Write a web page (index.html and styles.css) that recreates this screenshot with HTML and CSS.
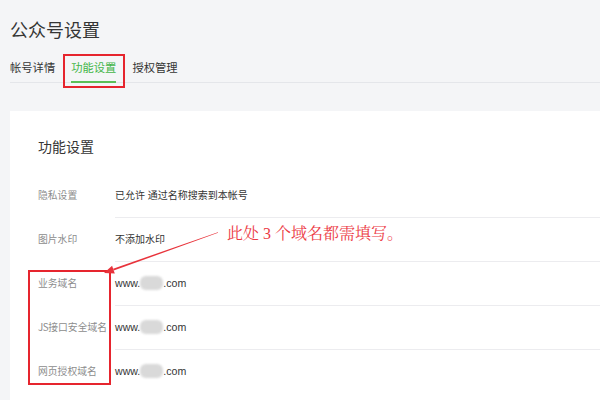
FILE: index.html
```html
<!DOCTYPE html>
<html lang="zh-CN">
<head>
<meta charset="utf-8">
<title>公众号设置</title>
<link rel="stylesheet" href="styles.css">
</head>
<body>
<div class="page">
  <h1 class="title">公众号设置</h1>
  <div class="tabs">
    <span class="tab">帐号详情</span>
    <span class="tab active">功能设置</span>
    <span class="tab">授权管理</span>
  </div>
  <div class="card">
    <h2 class="card-title">功能设置</h2>
    <div class="rows">
      <div class="row"><div class="label">隐私设置</div><div class="value">已允许 通过名称搜索到本帐号</div></div>
      <div class="row"><div class="label">图片水印</div><div class="value">不添加水印</div></div>
      <div class="row"><div class="label">业务域名</div><div class="value"><span class="latin">www.</span><span class="mask"></span><span class="latin">.com</span></div></div>
      <div class="row"><div class="label"><span class="label-latin">JS</span>接口安全域名</div><div class="value"><span class="latin">www.</span><span class="mask"></span><span class="latin">.com</span></div></div>
      <div class="row last"><div class="label">网页授权域名</div><div class="value"><span class="latin">www.</span><span class="mask"></span><span class="latin">.com</span></div></div>
    </div>
  </div>

  <div class="mark mark-tab"></div>
  <div class="mark mark-labels"></div>
  <svg class="arrow" width="600" height="400" viewBox="0 0 600 400">
    <polygon points="218.1,232.8 217.9,232.2 113.1,268.7 113.7,270.6" fill="#e8333b"/>
    <polygon points="104,273 114.8,273.6 112.1,265.7" fill="#e8333b"/>
  </svg>
  <div class="note">此处 3 个域名都需填写。</div>
</div>
</body>
</html>
```

FILE: styles.css
```css
html, body {
  margin: 0;
  padding: 0;
  background: #f4f5f7;
  font-family: "Liberation Sans", "Noto Sans CJK SC", sans-serif;
  color: #353535;
}

.page {
  position: relative;
  width: 600px;
  height: 400px;
  overflow: hidden;
  padding-left: 10px;
  box-sizing: border-box;
}

.title {
  margin: 19px 0 0 0;
  font-size: 18px;
  line-height: 24px;
  font-weight: normal;
  color: #353535;
}

.tabs {
  display: flex;
  gap: 16px;
  margin-top: 15px;
  border-bottom: 1px solid #e4e6ea;
}

.tab {
  font-size: 11.3px;
  line-height: 20px;
  padding-bottom: 3px;
  border-bottom: 2px solid transparent;
  margin-bottom: -1px;
  color: #353535;
}

.tab.active {
  color: #44b549;
  border-bottom-color: #5cbf58;
}

.card {
  margin-top: 28px;
  background: #ffffff;
  padding: 26px 0 40px 28px;
}

.card-title {
  margin: 0 0 17px 0;
  font-size: 14px;
  line-height: 20px;
  font-weight: normal;
  color: #353535;
}

.row {
  display: flex;
}

.label {
  width: 77px;
  flex: none;
  font-family: "Noto Sans CJK SC", sans-serif;
  font-size: 9.8px;
  line-height: 43px;
  color: #8d8d8d;
  white-space: nowrap;
}

.label-latin {
  letter-spacing: -0.4px;
}

.value {
  flex: 1;
  font-size: 10px;
  line-height: 43px;
  color: #353535;
  border-bottom: 1px solid #ececef;
}

.latin {
  font-size: 10.6px;
}

.row.last .value {
  border-bottom: none;
}

.mask {
  display: inline-block;
  width: 23px;
  height: 14px;
  vertical-align: -3px;
  background: #d9d9d9;
  border-radius: 6px;
  filter: blur(1.2px);
}

.mark {
  position: absolute;
  border: 2px solid #e6252e;
  box-sizing: border-box;
}

.mark-tab {
  left: 63px;
  top: 54px;
  width: 62px;
  height: 34px;
}

.mark-labels {
  left: 28px;
  top: 270px;
  width: 83px;
  height: 115px;
}

.arrow {
  position: absolute;
  left: 0;
  top: 0;
  pointer-events: none;
}

.note {
  position: absolute;
  left: 227px;
  top: 224px;
  font-family: "Liberation Serif", "Noto Serif CJK SC", "Noto Sans CJK SC", serif;
  font-size: 16px;
  line-height: 20px;
  color: #ec3a44;
  white-space: nowrap;
}
```
